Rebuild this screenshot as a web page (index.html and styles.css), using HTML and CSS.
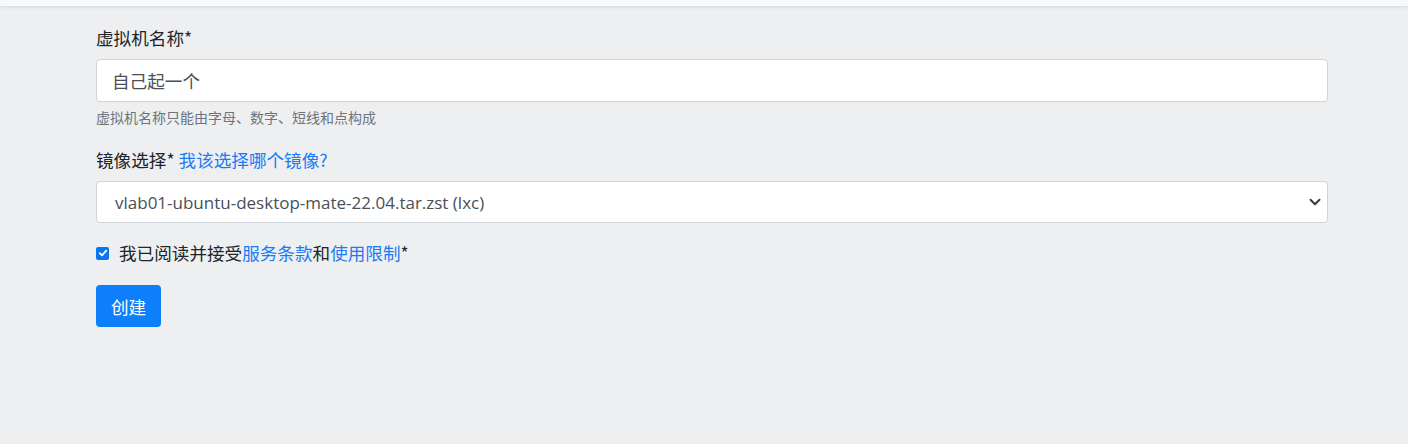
FILE: index.html
```html
<!DOCTYPE html>
<html lang="zh-CN">
<head>
<meta charset="utf-8">
<title>创建虚拟机</title>
<link rel="stylesheet" href="styles.css">
</head>
<body>
<div class="topbar"></div>
<main class="container">
  <form class="vm-form">
    <div class="form-group">
      <label class="form-label">虚拟机名称*</label>
      <input class="form-control" type="text" value="自己起一个">
      <small class="help">虚拟机名称只能由字母、数字、短线和点构成</small>
    </div>
    <div class="form-group">
      <label class="form-label">镜像选择* <a href="#" class="link">我该选择哪个镜像?</a></label>
      <div class="select-wrap">
        <div class="form-control select">vlab01-ubuntu-desktop-mate-22.04.tar.zst (lxc)</div>
        <svg class="chev" width="12" height="12" viewBox="0 0 16 16"><path d="M2 5l6 6 6-6" fill="none" stroke="#343a40" stroke-width="2.6" stroke-linecap="round" stroke-linejoin="round"/></svg>
      </div>
    </div>
    <div class="check-row">
      <span class="checkbox"><svg width="10" height="10" viewBox="0 0 10 10"><path d="M1.8 5.2l2.2 2.2 4.3-4.8" fill="none" stroke="#fff" stroke-width="1.8" stroke-linecap="round" stroke-linejoin="round"/></svg></span>
      <span class="check-label">我已阅读并接受<a href="#" class="link">服务条款</a>和<a href="#" class="link">使用限制</a>*</span>
    </div>
    <button type="button" class="btn">创建</button>
  </form>
</main>
</body>
</html>
```
FILE: styles.css
```css
html, body {
  margin: 0;
  padding: 0;
}
body {
  background: #eeeff1;
  font-family: "Noto Sans CJK SC", "Open Sans", sans-serif;
  font-size: 17.6px;
  color: #212529;
  height: 444px;
  overflow: hidden;
}
.topbar {
  height: 6px;
  background: #f8f9fa;
  box-shadow: 0 1px 4px rgba(0,0,0,0.10);
}
.container {
  padding: 0 80px 0 96px;
}
.vm-form {
  width: 1232px;
  display: flex;
  flex-direction: column;
}
.form-group {
  display: flex;
  flex-direction: column;
}
.form-label {
  line-height: 24px;
  height: 24px;
  margin-top: 20px;
  margin-bottom: 9px;
}
.form-group + .form-group .form-label {
  margin-top: 21px;
}
.link {
  color: #1a7cf5;
  text-decoration: none;
}
.form-control {
  box-sizing: border-box;
  height: 43px;
  border: 1px solid #ced4da;
  border-radius: 4px;
  background: #fff;
  padding: 0 15px;
  font-family: "Noto Sans CJK SC", "Open Sans", sans-serif;
  font-size: 17.6px;
  color: #495057;
  outline: none;
  width: 100%;
}
.select-wrap {
  position: relative;
}
.select {
  height: 42px;
  display: flex;
  align-items: center;
  padding-left: 18px;
  font-family: "Open Sans", "Noto Sans CJK SC", sans-serif;
  font-size: 17px;
}
.chev {
  position: absolute;
  right: 7px;
  top: 15px;
}
.help {
  font-size: 14px;
  color: #6c757d;
  line-height: 20px;
  margin-top: 5px;
}
.check-row {
  display: flex;
  align-items: center;
  margin-top: 18px;
  height: 24px;
  line-height: 24px;
}
.checkbox {
  width: 13px;
  height: 13px;
  border-radius: 2px;
  background: #0a75f0;
  display: flex;
  align-items: center;
  justify-content: center;
  margin-right: 10px;
}
.btn {
  align-self: flex-start;
  margin-top: 20px;
  width: 65px;
  height: 42px;
  border: none;
  border-radius: 4px;
  background: #0d7ffb;
  color: #fff;
  font-family: "Noto Sans CJK SC", sans-serif;
  font-size: 17.6px;
  padding: 0;
}
```
